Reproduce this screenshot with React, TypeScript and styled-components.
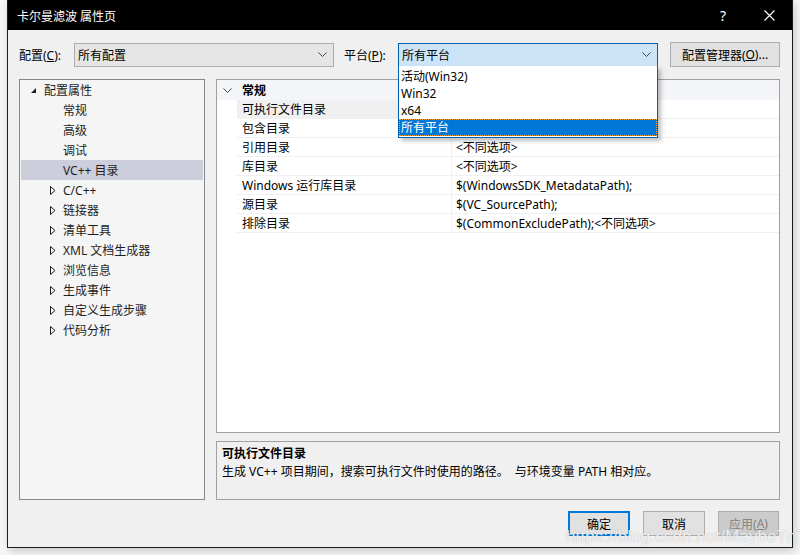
import * as React from 'react';
import styled, { createGlobalStyle } from 'styled-components';

const GlobalStyle = createGlobalStyle`
  html, body {
    margin: 0;
    padding: 0;
    background: #f6f6f6;
  }
  body {
    font-family: "Noto Sans", "Noto Sans CJK SC", sans-serif;
    font-size: 12px;
    color: #000;
  }
`;

const FONT = `"Noto Sans", "Noto Sans CJK SC", sans-serif`;

const Page = styled.div`
  width: 800px;
  height: 555px;
  position: relative;
  overflow: hidden;
  display: flex;
  align-items: flex-start;
  background: #f6f6f6;
`;

const Dialog = styled.div`
  margin-left: 7px;
  width: 786px;
  height: 548px;
  border: 1px solid #1b1b1b;
  border-top: none;
  box-sizing: border-box;
  background: #f0f0f0;
  display: flex;
  flex-direction: column;
  box-shadow: 2px 3px 8px rgba(0, 0, 0, 0.18);
`;

const TitleBar = styled.div`
  height: 30px;
  background: #000;
  color: #fff;
  display: flex;
  align-items: center;
  padding-left: 9px;
  font-family: ${FONT};
  font-size: 12px;
`;

const TitleText = styled.div`
  flex: 1;
  padding-top: 1px;
`;

const TitleBtn = styled.div`
  width: 46px;
  height: 30px;
  display: flex;
  align-items: center;
  justify-content: center;
  font-size: 14px;
`;

const Body = styled.div`
  flex: 1;
  display: flex;
  flex-direction: column;
  padding: 12px 12px 0 11px;
`;

const TopRow = styled.div`
  display: flex;
  align-items: center;
  height: 25px;
  position: relative;
`;

const Label = styled.div<{ $w: number }>`
  width: ${p => p.$w}px;
  flex-shrink: 0;
`;

const Combo = styled.div<{ $active?: boolean }>`
  width: 260px;
  height: 24px;
  box-sizing: border-box;
  border: 1px solid ${p => (p.$active ? '#0060b0' : '#adadad')};
  background: ${p => (p.$active ? '#cce4f7' : '#e5e5e5')};
  display: flex;
  align-items: center;
  padding: 0 6px 0 3px;
  position: relative;
`;

const ComboText = styled.div`
  flex: 1;
`;

const Button = styled.div<{ $w: number; $primary?: boolean; $disabled?: boolean }>`
  width: ${p => p.$w}px;
  height: 25px;
  box-sizing: border-box;
  border: ${p => (p.$primary ? '2px solid #0078d7' : '1px solid #adadad')};
  background: ${p => (p.$disabled ? '#cccccc' : '#e1e1e1')};
  color: ${p => (p.$disabled ? '#838383' : '#000')};
  display: flex;
  align-items: center;
  justify-content: center;
  flex-shrink: 0;
`;

const DropList = styled.div`
  position: absolute;
  left: 379px;
  top: 24px;
  width: 260px;
  box-sizing: border-box;
  border: 1px solid #0060b0;
  border-top: none;
  background: #fff;
  padding: 2px 0 1px 0;
  box-shadow: 3px 3px 4px rgba(0, 0, 0, 0.25);
  z-index: 10;
`;

const DropItem = styled.div<{ $sel?: boolean }>`
  height: 17px;
  line-height: 17px;
  padding-left: 2px;
  box-sizing: border-box;
  background: ${p => (p.$sel ? '#0078d7' : 'transparent')};
  color: ${p => (p.$sel ? '#fff' : '#000')};
  outline: ${p => (p.$sel ? '1px dotted #f0a030' : 'none')};
  outline-offset: -1px;
`;

const Main = styled.div`
  display: flex;
  margin-top: 12px;
  gap: 11px;
  height: 421px;
`;

const Tree = styled.div`
  width: 186px;
  box-sizing: border-box;
  border: 1px solid #828790;
  background: #f5f5f5;
  padding: 0 1px;
`;

const TreeRow = styled.div<{ $indent: number; $sel?: boolean }>`
  height: 20px;
  display: flex;
  align-items: center;
  padding-left: ${p => p.$indent}px;
  background: ${p => (p.$sel ? '#cccedb' : 'transparent')};
  color: #1e1e1e;
`;

const Arrow = styled.div<{ $w: number }>`
  width: ${p => p.$w}px;
  display: flex;
  align-items: center;
  flex-shrink: 0;
`;

const RightCol = styled.div`
  flex: 1;
  display: flex;
  flex-direction: column;
  gap: 8px;
`;

const Grid = styled.div`
  height: 354px;
  box-sizing: border-box;
  border: 1px solid #a0a0a0;
  background: #fff;
`;

const CatRow = styled.div`
  height: 20px;
  display: flex;
  align-items: center;
  background: #f3f5f9;
  font-weight: bold;
`;

const CatName = styled.span`
  padding-left: 5px;
`;

const Gutter = styled.div`
  width: 20px;
  flex-shrink: 0;
  display: flex;
  justify-content: center;
  align-items: center;
`;

const PropRow = styled.div`
  height: 19px;
  display: flex;
`;

const NameCell = styled.div<{ $sel?: boolean }>`
  width: 215px;
  box-sizing: border-box;
  padding-left: 5px;
  display: flex;
  align-items: center;
  border-bottom: 1px solid #f0f0f0;
  border-right: 1px solid #f0f0f0;
  background: ${p => (p.$sel ? '#f0f0f0' : '#fff')};
`;

const ValueCell = styled.div`
  flex: 1;
  padding-left: 4px;
  display: flex;
  align-items: center;
  border-bottom: 1px solid #f0f0f0;
`;

const Desc = styled.div`
  flex: 1;
  box-sizing: border-box;
  border: 1px solid #a0a0a0;
  background: #f0f0f0;
  padding: 4px 5px;
  display: flex;
  flex-direction: column;
  gap: 1px;
`;

const DescTitle = styled.div`
  font-weight: bold;
  line-height: 16px;
`;

const DescText = styled.div`
  line-height: 17px;
  white-space: pre;
`;

const Footer = styled.div`
  display: flex;
  justify-content: flex-end;
  gap: 13px;
  margin-top: 11px;
  padding-right: 1px;
`;

const Watermark = styled.div`
  position: absolute;
  left: 566px;
  top: 527px;
  font-family: "Liberation Sans", Arial, sans-serif;
  font-size: 17px;
  color: rgba(255, 255, 255, 0.85);
  text-shadow: 0 0 1px rgba(120, 120, 120, 0.6);
  letter-spacing: 0.1px;
  white-space: nowrap;
  pointer-events: none;
`;

const Chevron = () => (
  <svg width="9" height="5" viewBox="0 0 9 5">
    <path d="M0.5 0.5 L4.5 4.5 L8.5 0.5" fill="none" stroke="#444" strokeWidth="1" />
  </svg>
);

const Expanded = () => (
  <svg width="7" height="7" viewBox="0 0 7 7">
    <path d="M6 1 L6 6 L1 6 Z" fill="#1e1e1e" />
  </svg>
);

const Collapsed = () => (
  <svg width="6" height="9" viewBox="0 0 6 9">
    <path d="M0.5 0.5 L5 4.5 L0.5 8.5 Z" fill="none" stroke="#1e1e1e" strokeWidth="1" />
  </svg>
);

const CloseIcon = () => (
  <svg width="11" height="11" viewBox="0 0 11 11">
    <path d="M0.5 0.5 L10.5 10.5 M10.5 0.5 L0.5 10.5" stroke="#fff" strokeWidth="1.1" />
  </svg>
);

const tree: { label: string; kind: 'root' | 'leaf' | 'group'; sel?: boolean }[] = [
  { label: '配置属性', kind: 'root' },
  { label: '常规', kind: 'leaf' },
  { label: '高级', kind: 'leaf' },
  { label: '调试', kind: 'leaf' },
  { label: 'VC++ 目录', kind: 'leaf', sel: true },
  { label: 'C/C++', kind: 'group' },
  { label: '链接器', kind: 'group' },
  { label: '清单工具', kind: 'group' },
  { label: 'XML 文档生成器', kind: 'group' },
  { label: '浏览信息', kind: 'group' },
  { label: '生成事件', kind: 'group' },
  { label: '自定义生成步骤', kind: 'group' },
  { label: '代码分析', kind: 'group' },
];

const props: [string, string][] = [
  ['可执行文件目录', ''],
  ['包含目录', ''],
  ['引用目录', '<不同选项>'],
  ['库目录', '<不同选项>'],
  ['Windows 运行库目录', '$(WindowsSDK_MetadataPath);'],
  ['源目录', '$(VC_SourcePath);'],
  ['排除目录', '$(CommonExcludePath);<不同选项>'],
];

const platforms = ['活动(Win32)', 'Win32', 'x64', '所有平台'];

export default function App() {
  return (
    <Page>
      <GlobalStyle />
      <Dialog>
        <TitleBar>
          <TitleText>卡尔曼滤波 属性页</TitleText>
          <TitleBtn>?</TitleBtn>
          <TitleBtn><CloseIcon /></TitleBtn>
        </TitleBar>
        <Body>
          <TopRow>
            <Label $w={55}>配置(<u>C</u>):</Label>
            <Combo>
              <ComboText>所有配置</ComboText>
              <Chevron />
            </Combo>
            <Label $w={54} style={{ marginLeft: 10 }}>平台(<u>P</u>):</Label>
            <Combo $active>
              <ComboText>所有平台</ComboText>
              <Chevron />
            </Combo>
            <Button $w={110} style={{ marginLeft: 12 }}>配置管理器(<u>O</u>)...</Button>
            <DropList>
              {platforms.map((p, i) => (
                <DropItem key={p} $sel={i === platforms.length - 1}>{p}</DropItem>
              ))}
            </DropList>
          </TopRow>
          <Main>
            <Tree>
              {tree.map(t => (
                <TreeRow
                  key={t.label}
                  $indent={t.kind === 'root' ? 9 : t.kind === 'group' ? 29 : 42}
                  $sel={t.sel}
                >
                  {t.kind === 'root' && <Arrow $w={14}><Expanded /></Arrow>}
                  {t.kind === 'group' && <Arrow $w={13}><Collapsed /></Arrow>}
                  {t.label}
                </TreeRow>
              ))}
            </Tree>
            <RightCol>
              <Grid>
                <CatRow>
                  <Gutter><Chevron /></Gutter>
                  <CatName>常规</CatName>
                </CatRow>
                {props.map(([name, value], i) => (
                  <PropRow key={name}>
                    <Gutter />
                    <NameCell $sel={i === 0}>{name}</NameCell>
                    <ValueCell>{value}</ValueCell>
                  </PropRow>
                ))}
              </Grid>
              <Desc>
                <DescTitle>可执行文件目录</DescTitle>
                <DescText>生成 VC++ 项目期间，搜索可执行文件时使用的路径。  与环境变量 PATH 相对应。</DescText>
              </Desc>
            </RightCol>
          </Main>
          <Footer>
            <Button $w={62} $primary>确定</Button>
            <Button $w={62}>取消</Button>
            <Button $w={61} $disabled>应用(<u>A</u>)</Button>
          </Footer>
        </Body>
      </Dialog>
      <Watermark>https://blog.csdn.net/MaybeTnT</Watermark>
    </Page>
  );
}
